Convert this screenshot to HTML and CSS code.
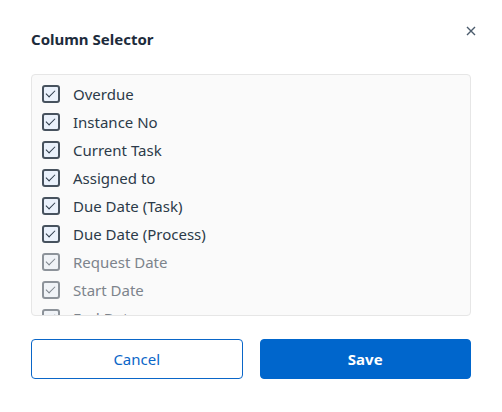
FILE: index.html
```html
<!DOCTYPE html>
<html lang="en">
<head>
    <meta charset="UTF-8">
    <meta name="viewport" content="width=device-width, initial-scale=1.0">
    <title>Column Selector</title>
    <link rel="stylesheet" href="styles.css">
</head>
<body>
    <div class="dialog">
        <div class="dialog-header">
            <h2>Column Selector</h2>
            <button class="close-btn" aria-label="Close">
                <svg width="10" height="10" viewBox="0 0 10 10">
                    <path d="M1 1 L9 9 M9 1 L1 9" stroke="#4b5b6c" stroke-width="1.4" fill="none"/>
                </svg>
            </button>
        </div>

        <div class="column-list">
            <label class="column-item"><span class="check"></span>Overdue</label>
            <label class="column-item"><span class="check"></span>Instance No</label>
            <label class="column-item"><span class="check"></span>Current Task</label>
            <label class="column-item"><span class="check"></span>Assigned to</label>
            <label class="column-item"><span class="check"></span>Due Date (Task)</label>
            <label class="column-item"><span class="check"></span>Due Date (Process)</label>
            <label class="column-item disabled"><span class="check"></span>Request Date</label>
            <label class="column-item disabled"><span class="check"></span>Start Date</label>
            <label class="column-item disabled"><span class="check"></span>End Date</label>
        </div>

        <div class="actions">
            <button class="btn btn-outline">Cancel</button>
            <button class="btn btn-primary">Save</button>
        </div>
    </div>
</body>
</html>
```

FILE: styles.css
```css
body {
    margin: 0;
    padding: 0;
    background-color: #ffffff;
    font-family: 'Noto Sans', 'Open Sans', sans-serif;
    color: #2c3a49;
}

.dialog {
    padding: 24px 31px 0 31px;
}

.dialog-header {
    display: flex;
    justify-content: space-between;
    align-items: flex-start;
    height: 50px;
}

.dialog-header h2 {
    margin: 5px 0 0 0;
    font-size: 15px;
    font-weight: bold;
    color: #1d2c3c;
}

.close-btn {
    background: none;
    border: none;
    padding: 0;
    margin: 2px -5px 0 0;
    width: 10px;
    height: 10px;
    cursor: pointer;
    display: flex;
}

.column-list {
    height: 229px;
    overflow: hidden;
    background-color: #fafafa;
    border: 1px solid #e6e6e6;
    border-radius: 4px;
    padding: 5px 10px 6px 10px;
}

.column-item {
    display: flex;
    align-items: center;
    height: 28px;
    font-size: 15px;
    color: #2c3a49;
}

.check {
    width: 14px;
    height: 14px;
    border: 2px solid #47525e;
    border-radius: 3px;
    background-color: #eaf1fb;
    margin-right: 13px;
    flex-shrink: 0;
    position: relative;
}

.check::after {
    content: "";
    position: absolute;
    left: 4px;
    top: 1px;
    width: 4px;
    height: 8px;
    border: solid #2c3a49;
    border-width: 0 1.5px 1.5px 0;
    transform: rotate(45deg);
}

.column-item.disabled {
    color: #7d848c;
}

.column-item.disabled .check {
    border-color: #8d939a;
    background-color: #f0f3f7;
}

.column-item.disabled .check::after {
    border-color: #7d848c;
}

.actions {
    display: flex;
    gap: 17px;
    margin-top: 23px;
}

.btn {
    flex: 1;
    height: 40px;
    border-radius: 4px;
    font-family: 'Noto Sans', 'Open Sans', sans-serif;
    font-size: 15px;
    cursor: pointer;
}

.btn-outline {
    background-color: #ffffff;
    border: 1px solid #0a66c8;
    color: #0a66c8;
}

.btn-primary {
    background-color: #0066cc;
    border: 1px solid #0066cc;
    color: #ffffff;
    font-weight: bold;
}
```
